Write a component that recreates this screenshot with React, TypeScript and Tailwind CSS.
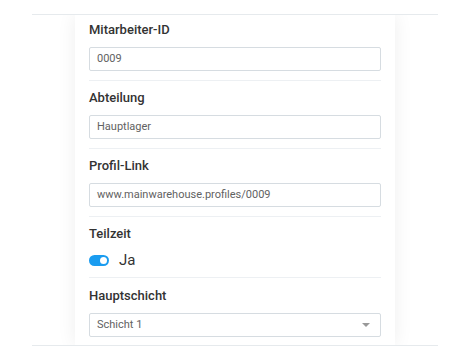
import React from 'react';

function Label({ children }: { children: React.ReactNode }) {
  return <div className="text-[13px] leading-[18px] font-medium text-[#333]">{children}</div>;
}

function TextField({ label, value, first }: { label: string; value: string; first?: boolean }) {
  return (
    <div className={`${first ? 'pt-[6px]' : 'pt-[8px] border-t border-[#edf0f3]'} pb-[9px]`}>
      <Label>{label}</Label>
      <div className="mt-[8px] h-[24px] border border-[#d6dce1] rounded-[2px] px-[7px] flex items-center text-[11px] text-[#626262]">
        {value}
      </div>
    </div>
  );
}

export default function App() {
  return (
    <div className="w-[470px] h-[360px] bg-white pt-[14px] font-['Roboto',sans-serif]">
      <div className="mx-[32px] h-[332px] border-y border-[#e6eaed] overflow-hidden">
        <div className="mx-auto w-[320px] h-full bg-white shadow-[0_0_18px_rgba(0,0,0,0.07)] px-[14px]">
          <TextField label="Mitarbeiter-ID" value="0009" first />
          <TextField label="Abteilung" value="Hauptlager" />
          <TextField label="Profil-Link" value="www.mainwarehouse.profiles/0009" />
          <div className="pt-[8px] pb-[7px] border-t border-[#edf0f3]">
            <Label>Teilzeit</Label>
            <div className="mt-[7px] h-[20px] flex items-center">
              <div className="w-[20px] h-[11px] rounded-full bg-[#1a9cf0] flex items-center justify-end pr-[2px]">
                <div className="w-[7px] h-[7px] rounded-full bg-white" />
              </div>
              <span className="ml-[10px] text-[15px] text-[#333]">Ja</span>
            </div>
          </div>
          <div className="pt-[9px] border-t border-[#edf0f3]">
            <Label>Hauptschicht</Label>
            <div className="mt-[8px] h-[24px] border border-[#d6dce1] rounded-[2px] pl-[7px] pr-[10px] flex items-center justify-between text-[11px] text-[#626262]">
              <span>Schicht 1</span>
              <svg width="8" height="4" viewBox="0 0 8 4">
                <path d="M0 0h8L4 4z" fill="#999" />
              </svg>
            </div>
          </div>
        </div>
      </div>
    </div>
  );
}
